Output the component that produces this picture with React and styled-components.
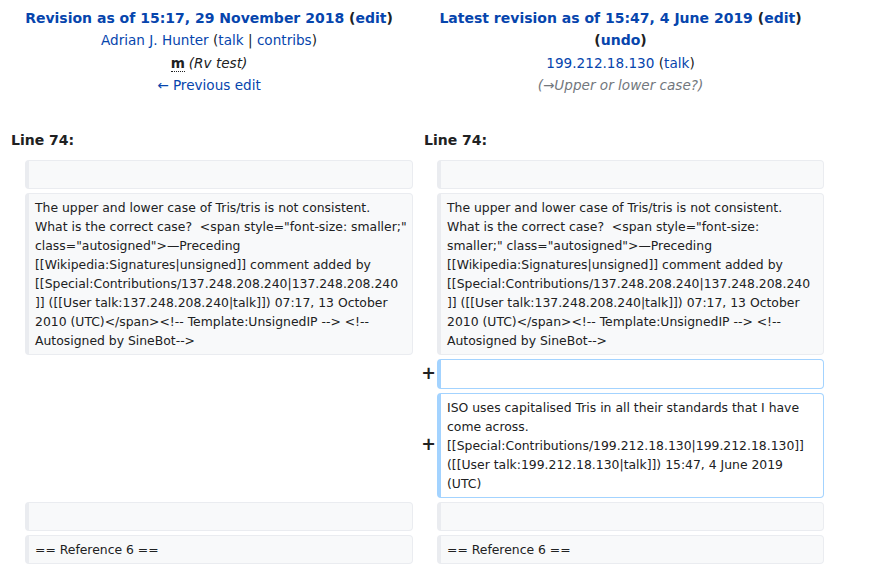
import React from "react";
import styled, { createGlobalStyle } from "styled-components";

const Global = createGlobalStyle`
  html, body { margin: 0; padding: 0; background: #fff; }
  body { font-family: "DejaVu Sans", sans-serif; color: #202122; }
`;

const LINK = "#0645ad";

const Page = styled.div`
  padding-left: 1px;
`;

const DiffGrid = styled.div`
  display: grid;
  grid-template-columns: 16px 388px 16px 387px;
  column-gap: 4px;
  row-gap: 4px;
  padding: 4px;
  width: max-content;
`;

const HeaderCell = styled.div`
  grid-column: span 2;
  text-align: center;
  font-size: 13.6px;
  line-height: 22.4px;
  padding: 3px 0 24px;
`;

const Line = styled.div``;

const Title = styled.div`
  font-weight: bold;
  font-size: 14px;
  color: ${LINK};
`;

const Link = styled.a`
  color: ${LINK};
  text-decoration: none;
  font-weight: inherit;
`;

const Paren = styled.span`
  color: #202122;
`;

const Minor = styled.abbr`
  font-weight: bold;
  text-decoration: none;
  border-bottom: 1px dotted #202122;
  margin-right: 4px;
`;

const Comment = styled.span`
  font-style: italic;
  color: ${(p) => (p.$auto ? "#72777d" : "#202122")};
`;

const LineNo = styled.div`
  grid-column: span 2;
  font-size: 14px;
  font-weight: bold;
  line-height: 22.4px;
  padding: 4px 0 5px ${(p) => p.$pad}px;
`;

const Marker = styled.div`
  display: flex;
  align-items: center;
  justify-content: flex-end;
  font-size: 17.5px;
  font-weight: bold;
  line-height: 1;
  margin-right: -3px;
`;

const Blank = styled.div``;

const Cell = styled.div`
  font-size: 12.4px;
  line-height: 19px;
  min-height: 19px;
  white-space: pre;
  overflow: visible;
  padding: 4.1px 0 4.1px 6px;
  border-style: solid;
  border-width: 1px 1px 1px 4px;
  border-radius: 4px;
  border-color: ${(p) => (p.$added ? "#a3d3ff" : "#eaecf0")};
  background: ${(p) => (p.$added ? "#ffffff" : "#f8f9fa")};
  color: #202122;
`;

const leftText = [
  "The upper and lower case of Tris/tris is not consistent.",
  'What is the correct case?  <span style="font-size: smaller;"',
  'class="autosigned">\u2014Preceding',
  "[[Wikipedia:Signatures|unsigned]] comment added by",
  "[[Special:Contributions/137.248.208.240|137.248.208.240",
  "]] ([[User talk:137.248.208.240|talk]]) 07:17, 13 October",
  "2010 (UTC)</span><!-- Template:UnsignedIP --> <!--",
  "Autosigned by SineBot-->",
].join("\n");

const rightText = [
  "The upper and lower case of Tris/tris is not consistent.",
  'What is the correct case?  <span style="font-size:',
  'smaller;" class="autosigned">\u2014Preceding',
  "[[Wikipedia:Signatures|unsigned]] comment added by",
  "[[Special:Contributions/137.248.208.240|137.248.208.240",
  "]] ([[User talk:137.248.208.240|talk]]) 07:17, 13 October",
  "2010 (UTC)</span><!-- Template:UnsignedIP --> <!--",
  "Autosigned by SineBot-->",
].join("\n");

const addedText = [
  "ISO uses capitalised Tris in all their standards that I have",
  "come across.",
  "[[Special:Contributions/199.212.18.130|199.212.18.130]]",
  "([[User talk:199.212.18.130|talk]]) 15:47, 4 June 2019",
  "(UTC)",
].join("\n");

export default function App() {
  return (
    <Page>
      <Global />
      <DiffGrid>
        <HeaderCell>
          <Title>
            <Link href="#">Revision as of 15:17, 29 November 2018</Link>{" "}
            <Paren>
              (<Link href="#">edit</Link>)
            </Paren>
          </Title>
          <Line>
            <Link href="#">Adrian J. Hunter</Link> <Paren>(</Paren>
            <Link href="#">talk</Link> <Paren>|</Paren>{" "}
            <Link href="#">contribs</Link>
            <Paren>)</Paren>
          </Line>
          <Line>
            <Minor title="This is a minor edit">m</Minor>
            <Comment>(Rv test)</Comment>
          </Line>
          <Line>
            <Link href="#">← Previous edit</Link>
          </Line>
        </HeaderCell>
        <HeaderCell>
          <Title>
            <Link href="#">Latest revision as of 15:47, 4 June 2019</Link>{" "}
            <Paren>
              (<Link href="#">edit</Link>)
            </Paren>
          </Title>
          <Title>
            <Paren>
              (<Link href="#">undo</Link>)
            </Paren>
          </Title>
          <Line>
            <Link href="#">199.212.18.130</Link> <Paren>(</Paren>
            <Link href="#">talk</Link>
            <Paren>)</Paren>
          </Line>
          <Line>
            <Comment $auto>(→Upper or lower case?)</Comment>
          </Line>
        </HeaderCell>

        <LineNo $pad={6}>Line 74:</LineNo>
        <LineNo $pad={7}>Line 74:</LineNo>

        <Marker />
        <Cell />
        <Marker />
        <Cell />

        <Marker />
        <Cell>{leftText}</Cell>
        <Marker />
        <Cell>{rightText}</Cell>

        <Blank />
        <Blank />
        <Marker>+</Marker>
        <Cell $added />

        <Blank />
        <Blank />
        <Marker>+</Marker>
        <Cell $added>{addedText}</Cell>

        <Marker />
        <Cell />
        <Marker />
        <Cell />

        <Marker />
        <Cell>== Reference 6 ==</Cell>
        <Marker />
        <Cell>== Reference 6 ==</Cell>
      </DiffGrid>
    </Page>
  );
}
